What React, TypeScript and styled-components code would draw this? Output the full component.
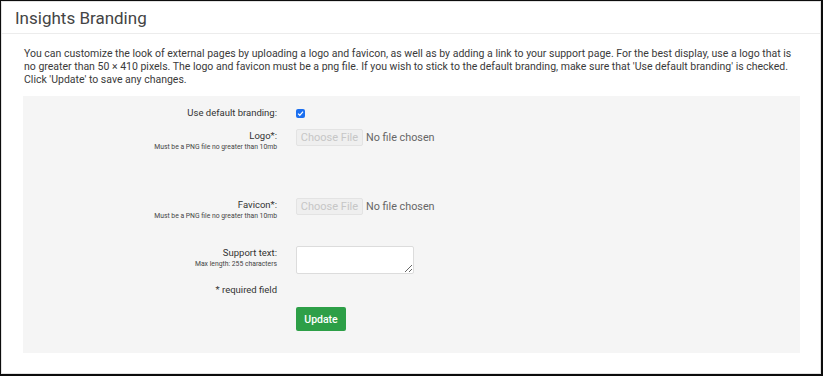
import React from "react";
import styled, { createGlobalStyle } from "styled-components";

const Global = createGlobalStyle`
  html, body, #root { height: 100%; }
  * { box-sizing: border-box; }
  body {
    margin: 0;
    background: #0c0c0c;
    font-family: Roboto, "Liberation Sans", Arial, sans-serif;
    color: #333;
  }
  #root { padding: 1px 2px 2px 1px; }
`;

const Panel = styled.div`
  height: 100%;
  background: #fff;
  border: 1px solid #e2e2e2;
  display: flex;
  flex-direction: column;
`;

const Header = styled.div`
  height: 32px;
  border-bottom: 1px solid #ececec;
  padding: 0 0 0 13px;
  display: flex;
  align-items: center;
`;

const Title = styled.h1`
  margin: 0;
  font-size: 17px;
  font-weight: 400;
  color: #444;
`;

const Body = styled.div`
  padding: 13px 20px 0 21px;
`;

const Intro = styled.p`
  margin: 0 0 10px 1px;
  font-size: 10.5px;
  line-height: 13px;
  color: #3a3a3a;
`;

const FormBox = styled.div`
  background: #f5f5f5;
  padding: 10px 0 22px;
`;

const Row = styled.div<{ $h: number }>`
  display: grid;
  grid-template-columns: 254px 1fr;
  column-gap: 19px;
  height: ${(p) => p.$h}px;
  align-items: start;
`;

const LabelCol = styled.div`
  text-align: right;
  display: flex;
  flex-direction: column;
  align-items: flex-end;
`;

const Label = styled.label`
  font-size: 9.5px;
  line-height: 14px;
  color: #333;
`;

const Hint = styled.span`
  font-size: 6.8px;
  line-height: 8px;
  color: #444;
`;

const Control = styled.div`
  display: flex;
  align-items: center;
  gap: 3px;
`;

const CheckBox = styled.span`
  margin-top: 3px;
  width: 9px;
  height: 9px;
  border-radius: 2px;
  background: #1b6ff0;
  display: flex;
  align-items: center;
  justify-content: center;
`;

const FileButton = styled.button`
  height: 17px;
  width: 67px;
  padding: 0;
  font-family: inherit;
  font-size: 11px;
  color: #c6c6c6;
  background: #efefef;
  border: 1px solid #e3e3e3;
  border-radius: 2px;
`;

const FileText = styled.span`
  font-size: 10.8px;
  color: #666;
`;

const TextArea = styled.textarea`
  width: 118px;
  height: 28px;
  border: 1px solid #dcdcdc;
  border-radius: 2px;
  background: #fff;
  font-family: inherit;
  font-size: 10px;
  padding: 2px;
`;

const UpdateButton = styled.button`
  width: 50px;
  height: 24px;
  background: #2d9f47;
  border: none;
  border-radius: 2px;
  color: #fff;
  font-family: inherit;
  font-size: 10.5px;
  font-weight: 500;
  padding: 0;
`;

const Check = () => (
  <svg width="7" height="7" viewBox="0 0 10 10">
    <path d="M1.5 5.2 L4 7.6 L8.6 2.4" fill="none" stroke="#fff" strokeWidth="1.8" />
  </svg>
);

const FileInput = () => (
  <Control>
    <FileButton type="button">Choose File</FileButton>
    <FileText>No file chosen</FileText>
  </Control>
);

export default function App() {
  return (
    <>
      <Global />
      <Panel>
        <Header>
          <Title>Insights Branding</Title>
        </Header>
        <Body>
          <Intro>
            You can customize the look of external pages by uploading a logo and favicon, as well as by adding a link to your support page. For the best display, use a logo that is no greater than 50 × 410 pixels. The logo and favicon must be a png file. If you wish to stick to the default branding, make sure that 'Use default branding' is checked. Click 'Update' to save any changes.
          </Intro>
          <FormBox>
            <Row $h={23}>
              <LabelCol>
                <Label>Use default branding:</Label>
              </LabelCol>
              <Control>
                <CheckBox>
                  <Check />
                </CheckBox>
              </Control>
            </Row>
            <Row $h={69}>
              <LabelCol>
                <Label>Logo*:</Label>
                <Hint>Must be a PNG file no greater than 10mb</Hint>
              </LabelCol>
              <FileInput />
            </Row>
            <Row $h={48}>
              <LabelCol>
                <Label>Favicon*:</Label>
                <Hint>Must be a PNG file no greater than 10mb</Hint>
              </LabelCol>
              <FileInput />
            </Row>
            <Row $h={37}>
              <LabelCol>
                <Label>Support text:</Label>
                <Hint>Max length: 255 characters</Hint>
              </LabelCol>
              <Control>
                <TextArea />
              </Control>
            </Row>
            <Row $h={24}>
              <LabelCol>
                <Label>* required field</Label>
              </LabelCol>
              <div />
            </Row>
            <Row $h={24}>
              <div />
              <Control>
                <UpdateButton type="button">Update</UpdateButton>
              </Control>
            </Row>
          </FormBox>
        </Body>
      </Panel>
    </>
  );
}
